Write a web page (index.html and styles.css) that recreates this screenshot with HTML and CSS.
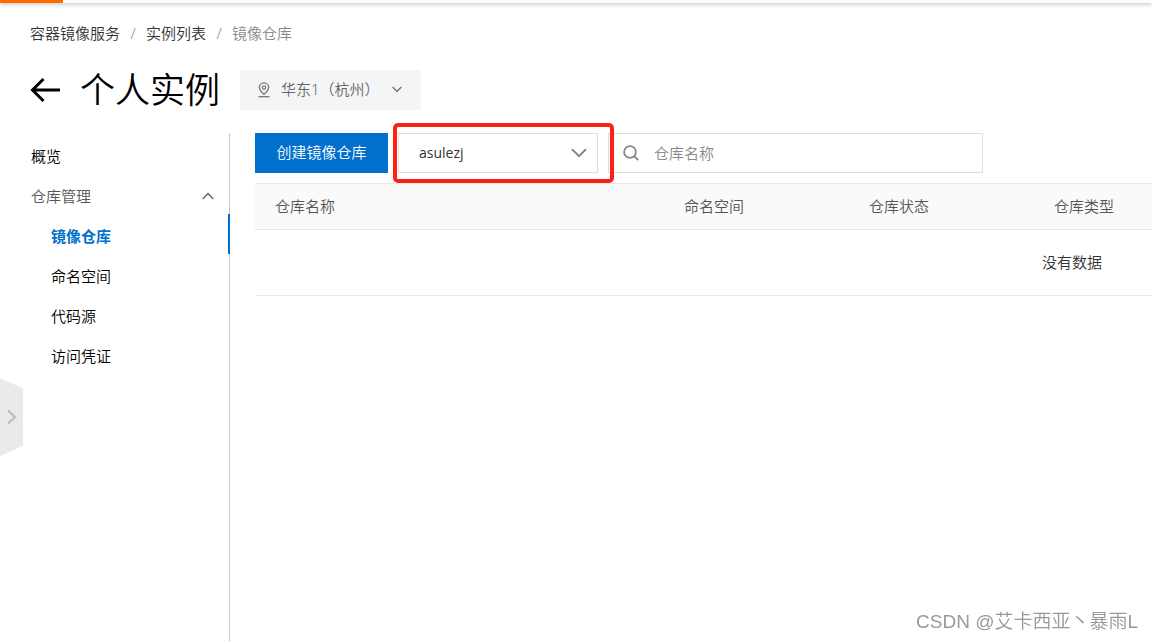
FILE: index.html
```html
<!DOCTYPE html>
<html lang="zh-CN">
<head>
<meta charset="utf-8">
<meta name="viewport" content="width=device-width, initial-scale=1">
<title>镜像仓库</title>
<link rel="stylesheet" href="styles.css">
</head>
<body>
<div class="topbar"><div class="topbar-brand"></div></div>
<header class="page-header">
  <nav class="breadcrumb" aria-label="面包屑">
    <a href="#">容器镜像服务</a><span class="sep">/</span><a href="#">实例列表</a><span class="sep">/</span><span class="current">镜像仓库</span>
  </nav>
  <div class="title-row">
    <button class="back" type="button" aria-label="返回">
      <svg width="30" height="28" viewBox="0 0 30 28" fill="none" stroke="#000" stroke-width="3"><path d="M13.500 3 2.500 14l11 11M2.500 14H30"/></svg>
    </button>
    <h1 class="title">个人实例</h1>
    <div class="region">
      <svg class="region-pin" width="14" height="16" viewBox="0 0 14 16" fill="none" stroke="#777" stroke-width="1.3"><path d="M7 12.300C4.300 10 2.300 8 2.300 5.500a4.700 4.700 0 0 1 9.400 0C11.700 8 9.700 10 7 12.300z"/><circle cx="7" cy="5.600" r="1.700"/><path d="M1.500 14.700h11"/></svg>
      <select class="region-select" aria-label="地域"><option>华东1（杭州）</option></select>
      <svg class="region-arrow" width="10" height="7" viewBox="0 0 10 7" fill="none" stroke="#777" stroke-width="1.500"><path d="m.7 1 4.300 4.500L9.300 1"/></svg>
    </div>
  </div>
</header>
<div class="layout">
  <nav class="sidebar" aria-label="实例菜单">
    <a class="item" href="#">概览</a>
    <button class="item group" type="button" aria-expanded="true">仓库管理
      <svg width="12" height="8" viewBox="0 0 12 8" fill="none" stroke="#666" stroke-width="1.500"><path d="m.8 7 5.200-5.400L11.200 7"/></svg>
    </button>
    <a class="item sub active" href="#" aria-current="page">镜像仓库</a>
    <a class="item sub" href="#">命名空间</a>
    <a class="item sub" href="#">代码源</a>
    <a class="item sub" href="#">访问凭证</a>
  </nav>
  <main class="content">
    <div class="toolbar">
      <button class="create" type="button">创建镜像仓库</button>
      <div class="namespace">
        <select class="namespace-select" aria-label="命名空间"><option>asulezj</option></select>
        <svg class="namespace-arrow" width="16" height="10" viewBox="0 0 16 10" fill="none" stroke="#888" stroke-width="2"><path d="m1 1.200 7 7 7-7"/></svg>
        <span class="highlight"></span>
      </div>
      <label class="search">
        <svg width="16" height="16" viewBox="0 0 16 16" fill="none" stroke="#888" stroke-width="1.800"><circle cx="7" cy="7" r="5.900"/><path d="m11 11 4.200 4.200"/></svg>
        <input class="search-input" type="text" placeholder="仓库名称" aria-label="仓库名称">
      </label>
    </div>
    <div class="table-scroll">
      <table class="repos">
        <colgroup><col class="col-name"><col class="col-std"><col class="col-std"><col></colgroup>
        <thead><tr><th>仓库名称</th><th>命名空间</th><th>仓库状态</th><th>仓库类型</th></tr></thead>
        <tbody><tr><td colspan="4">没有数据</td></tr></tbody>
      </table>
    </div>
  </main>
</div>
<button class="drawer" type="button" aria-label="展开">
  <svg width="10" height="16" viewBox="0 0 10 16" fill="none" stroke="#bbb" stroke-width="2"><path d="m1 1.500 7 6.500-7 6.500"/></svg>
</button>
<div class="watermark">CSDN @艾卡西亚丶暴雨L</div>
</body>
</html>
```
FILE: styles.css
```css
* { box-sizing: border-box; }
body {
  margin: 0;
  min-height: 100vh;
  display: flex;
  flex-direction: column;
  background: #fff;
  color: #333;
  font: 350 15px/20px "Noto Sans", "Noto Sans CJK SC", sans-serif;
}
button, select, input { font: inherit; color: inherit; margin: 0; padding: 0; border: 0; border-radius: 0; background: none; }
select { appearance: none; width: 100%; height: 100%; }
a { color: inherit; text-decoration: none; }

.topbar { height: 3px; box-shadow: 0 1px 4px rgba(0, 0, 0, .3); }
.topbar-brand { width: 63px; height: 3px; background: #ff6a00; }

.page-header { padding: 20px 30px 23px; }
.breadcrumb { display: flex; color: #333; }
.sep { width: 26px; text-align: center; color: #888; }
.current { color: #888; }
.title-row { display: flex; align-items: center; height: 40px; margin-top: 27px; }
.back { display: flex; margin-right: 20px; }
.title { margin: 0 20px 0 0; font-size: 35px; line-height: 40px; font-weight: 350; color: #000; }
.region { position: relative; width: 181px; height: 40px; background: #f4f5f7; border-radius: 2px; color: #666; }
.region-select { padding: 0 0 2px 41px; }
.region-pin { position: absolute; left: 17px; top: 12px; pointer-events: none; }
.region-arrow { position: absolute; right: 19px; top: 16px; pointer-events: none; }

.layout { display: flex; flex: 1; min-width: 0; }
.sidebar { flex: 0 0 230px; padding-top: 1px; box-shadow: inset -1px 0 #c8c8c8; color: #000; }
.item { display: flex; align-items: center; width: 100%; height: 40px; padding: 4px 16px 0 31px; }
.group { justify-content: space-between; color: #555; }
.sub { padding-left: 51px; }
.active { color: #0070cc; font-weight: 700; border-right: 2px solid #0070cc; }

.content { flex: 1; min-width: 0; padding-left: 25px; }
.toolbar { display: flex; gap: 10px; height: 40px; margin-bottom: 10px; }
.create { width: 133px; padding-bottom: 2px; background: #0070cc; color: #fff; }
.namespace { position: relative; width: 200px; border: 1px solid #dedede; }
.namespace-select { padding-left: 20px; font-family: "Open Sans", sans-serif; font-size: 14px; font-weight: 400; }
.namespace-arrow { position: absolute; right: 10px; top: 14px; pointer-events: none; }
.highlight { position: absolute; inset: -11px -17px -11px -6px; border: 4px solid #ff2015; border-radius: 5px; pointer-events: none; }
.search { display: flex; align-items: center; gap: 15px; width: 375px; padding-left: 14px; border: 1px solid #dedede; }
.search-input { flex: 1; min-width: 0; height: 100%; outline: 0; }
.search-input::placeholder { color: #888; opacity: 1; }

.table-scroll { overflow-x: auto; scrollbar-width: none; }
.repos { width: 1634px; table-layout: fixed; border-collapse: collapse; }
.col-name { width: 409px; }
.col-std { width: 185px; }
.repos th { height: 46px; padding: 0 20px 2px; text-align: left; font-weight: 350; color: #555; background: #fafafa; border: solid #e8e8e8; border-width: 1px 0; }
.repos td { height: 66px; padding: 0 0 2px; text-align: center; border-bottom: 1px solid #e8e8e8; }

.drawer { position: fixed; left: 0; top: 378px; width: 23px; height: 78px; padding: 0 0 0 7px; display: flex; align-items: center; background: #eaeaea; clip-path: polygon(0 0, 100% 13%, 100% 87%, 0 100%); }
.watermark { position: fixed; right: 14px; bottom: 7px; font: 350 19px/24px "Liberation Sans", "Noto Sans CJK SC", sans-serif; color: #999; text-shadow: 1px 1px 1px #fff; pointer-events: none; }
```
